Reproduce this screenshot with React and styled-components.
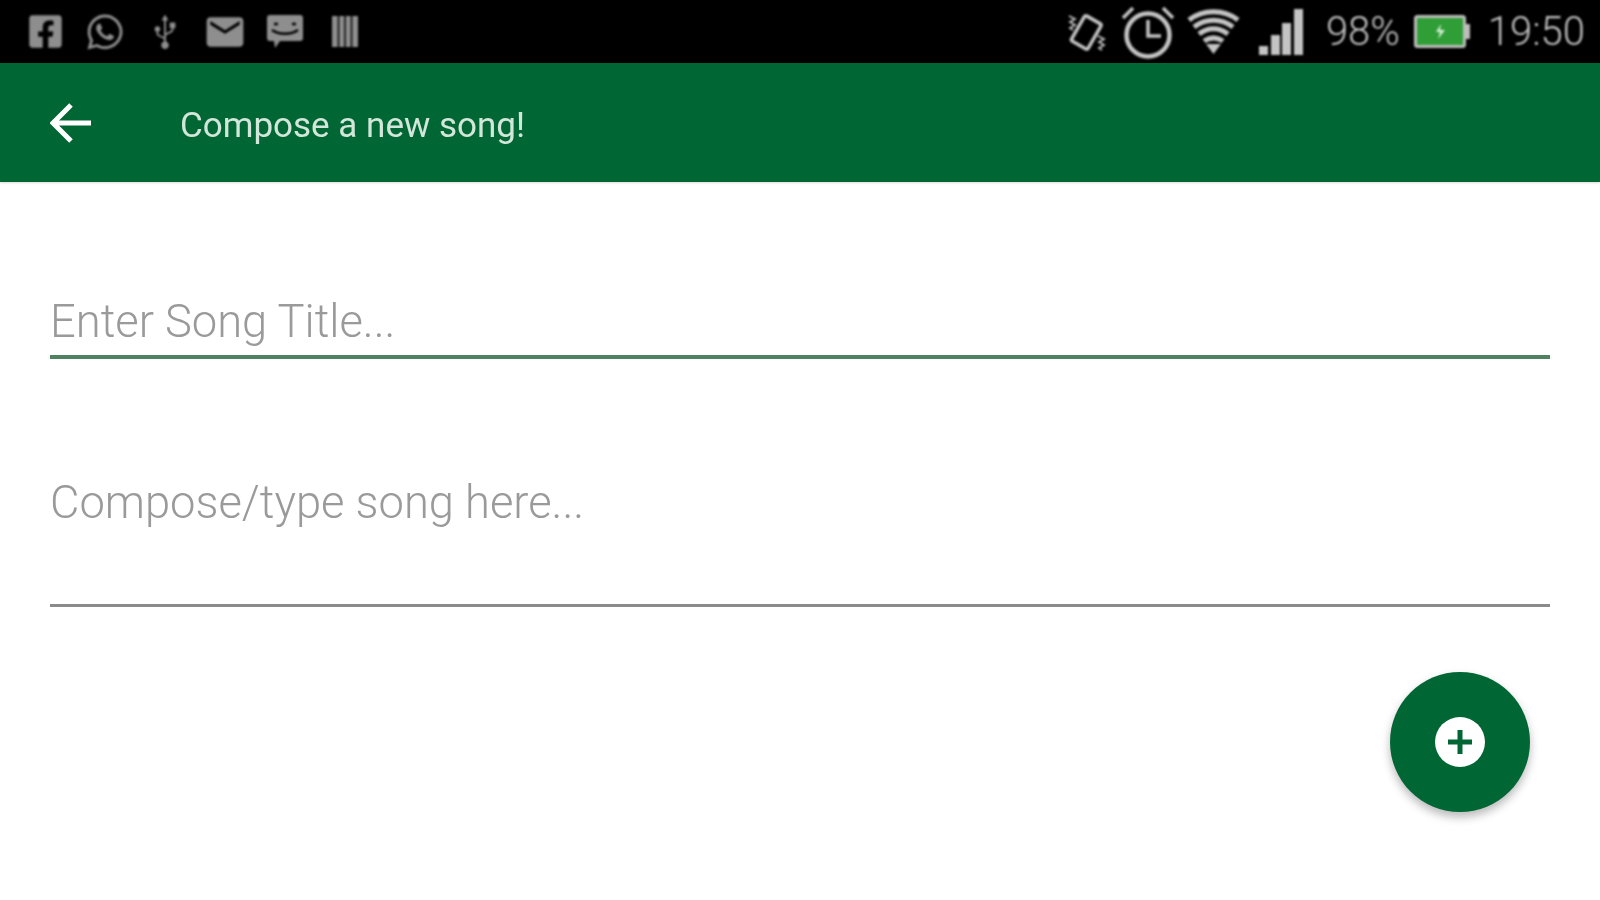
import React from 'react';
import styled, { createGlobalStyle } from 'styled-components';
import { FaFacebookSquare, FaWhatsapp, FaUsb } from 'react-icons/fa';
import { MdEmail } from 'react-icons/md';

const GlobalStyle = createGlobalStyle`
  html, body {
    margin: 0;
    padding: 0;
    background: #fff;
    font-family: Roboto, "Liberation Sans", sans-serif;
  }
`;

const Page = styled.div`
  width: 1600px;
  height: 900px;
  overflow: hidden;
  display: flex;
  flex-direction: column;
  background: #fff;
`;

const StatusBar = styled.div`
  height: 63px;
  flex: none;
  background: #000;
  display: flex;
  align-items: center;
  justify-content: space-between;
  padding: 0 15px 0 15px;
`;

const LeftIcons = styled.div`
  display: flex;
  align-items: center;
  filter: blur(0.9px);
`;

const Slot = styled.div`
  width: 60px;
  height: 63px;
  display: flex;
  align-items: center;
  justify-content: center;
  color: #8e8e8e;
`;

const RightIcons = styled.div`
  display: flex;
  align-items: center;
  color: #c4c4c4;
  filter: blur(0.9px);
`;

const Glyph = styled.div`
  display: flex;
  margin-left: ${props => props.$gap}px;
`;

const StatusText = styled.span`
  margin-left: ${props => props.$gap}px;
  font-size: 40px;
  font-weight: 300;
  line-height: 63px;
  color: #c4c4c4;
`;

const AppBar = styled.header`
  height: 119px;
  flex: none;
  background: #006633;
  display: flex;
  align-items: center;
  padding-left: 50px;
  box-shadow: 0 1px 2px rgba(0, 0, 0, 0.15);
`;

const BackButton = styled.div`
  display: flex;
  width: 130px;
  color: #fff;
  filter: blur(0.6px);
`;

const Title = styled.h1`
  margin: 6px 0 0;
  font-size: 35px;
  font-weight: 400;
  color: #d3e6da;
  filter: blur(0.7px);
`;

const Content = styled.main`
  flex: 1;
  display: flex;
  flex-direction: column;
  padding: 112px 50px 0;
`;

const Field = styled.div`
  height: ${props => props.$height}px;
  margin-bottom: ${props => props.$after}px;
  border-bottom: ${props => props.$focused ? '4px solid #4f8260' : '3px solid #8a8a8a'};
  font-size: 45.3px;
  font-weight: 300;
  line-height: 56px;
  color: #9a9a9a;
  filter: blur(0.7px);
`;

const Fab = styled.button`
  align-self: flex-end;
  width: 140px;
  height: 140px;
  margin: 65px 20px 0 0;
  padding: 0;
  border: none;
  border-radius: 50%;
  background: #006633;
  box-shadow: 0 5px 10px rgba(0, 0, 0, 0.28);
  display: flex;
  align-items: center;
  justify-content: center;
  filter: blur(0.5px);
`;

const VibrateIcon = () => (
  <svg width="39" height="44" viewBox="0 0 39 44" fill="none" stroke="currentColor">
    <rect x="10" y="8" width="19" height="29" rx="2" strokeWidth="3.500" transform="rotate(30 19.500 22)" />
    <path d="M2 6l6 3-5 3 5 3-5 3 3 2M31 26l6 3-5 3 5 3-5 3 3 2" strokeWidth="1.800" />
  </svg>
);

const AlarmIcon = () => (
  <svg width="54" height="54" viewBox="0 0 54 54" fill="none" stroke="currentColor">
    <circle cx="27" cy="30" r="21.500" strokeWidth="4.500" />
    <path d="M27 15v16h13" strokeWidth="3.500" />
    <path d="M2 13L12 3M52 13L42 3" strokeWidth="3.500" />
  </svg>
);

const WifiIcon = () => (
  <svg width="55" height="45" viewBox="0 0 55 45" fill="none" stroke="currentColor" strokeWidth="5">
    <path d="M3 11C17 0 38 0 52 11" />
    <path d="M8 18C20 9 35 9 47 18" />
    <path d="M13 25C22 18 33 18 42 25" />
    <path d="M18 32C24 28 31 28 37 32" />
    <path d="M20 35h15l-7.500 10z" fill="currentColor" stroke="none" />
  </svg>
);

const SignalIcon = () => (
  <svg width="44" height="46" viewBox="0 0 44 46" fill="currentColor">
    <rect x="0" y="37" width="9" height="9" />
    <rect x="12" y="26" width="9" height="20" />
    <rect x="23" y="14" width="9" height="32" />
    <rect x="35" y="0" width="9" height="46" />
  </svg>
);

const BatteryIcon = () => (
  <svg width="56" height="33" viewBox="0 0 56 33">
    <rect x="1.500" y="1.500" width="49" height="30" rx="2" fill="#2f9e36" stroke="#bdbdbd" strokeWidth="3" />
    <rect x="51" y="9" width="5" height="15" fill="#bdbdbd" />
    <path d="M27 9l-5 8h4l-2 7 7-9h-5z" fill="#d8f0d8" />
  </svg>
);

const MessageIcon = () => (
  <svg width="36" height="33" viewBox="0 0 36 33" fill="currentColor">
    <path d="M3 0h30a3 3 0 0 1 3 3v20a3 3 0 0 1-3 3H13l-5 7-1-7H3a3 3 0 0 1-3-3V3a3 3 0 0 1 3-3z" />
    <path d="M5 15c7 5 19 5 26 0" stroke="#000" strokeWidth="2.500" fill="none" />
    <path d="M7 9h4M25 9h4" stroke="#000" strokeWidth="2.500" />
  </svg>
);

const BarcodeIcon = () => (
  <svg width="26" height="31" viewBox="0 0 26 31" fill="currentColor">
    <rect x="0" y="0" width="26" height="31" />
    <path d="M6.500 0v31M13 0v31M19.500 0v31" stroke="#000" strokeWidth="1.500" />
  </svg>
);

const BackArrow = () => (
  <svg width="42" height="40" viewBox="0 0 42 40" fill="none" stroke="currentColor" strokeWidth="5">
    <path d="M41 20H4M21 2L3 20l18 18" />
  </svg>
);

const PlusBadge = () => (
  <svg width="50" height="50" viewBox="0 0 50 50">
    <circle cx="25" cy="25" r="25" fill="#fff" />
    <path d="M25 13v24M13 25h24" stroke="#006633" strokeWidth="5" />
  </svg>
);

export default function App() {
  return (
    <Page>
      <GlobalStyle />
      <StatusBar>
        <LeftIcons>
          <Slot><FaFacebookSquare size={37} /></Slot>
          <Slot><FaWhatsapp size={40} /></Slot>
          <Slot><FaUsb size={34} style={{ transform: 'rotate(-90deg)' }} /></Slot>
          <Slot><MdEmail size={44} /></Slot>
          <Slot><MessageIcon /></Slot>
          <Slot><BarcodeIcon /></Slot>
        </LeftIcons>
        <RightIcons>
          <Glyph $gap={0}><VibrateIcon /></Glyph>
          <Glyph $gap={15}><AlarmIcon /></Glyph>
          <Glyph $gap={11}><WifiIcon /></Glyph>
          <Glyph $gap={18}><SignalIcon /></Glyph>
          <StatusText $gap={23}>98%</StatusText>
          <Glyph $gap={14}><BatteryIcon /></Glyph>
          <StatusText $gap={18}>19:50</StatusText>
        </RightIcons>
      </StatusBar>
      <AppBar>
        <BackButton><BackArrow /></BackButton>
        <Title>Compose a new song!</Title>
      </AppBar>
      <Content>
        <Field $focused $height={61} $after={116}>Enter Song Title...</Field>
        <Field $height={129} $after={0}>Compose/type song here...</Field>
        <Fab aria-label="Add"><PlusBadge /></Fab>
      </Content>
    </Page>
  );
}
